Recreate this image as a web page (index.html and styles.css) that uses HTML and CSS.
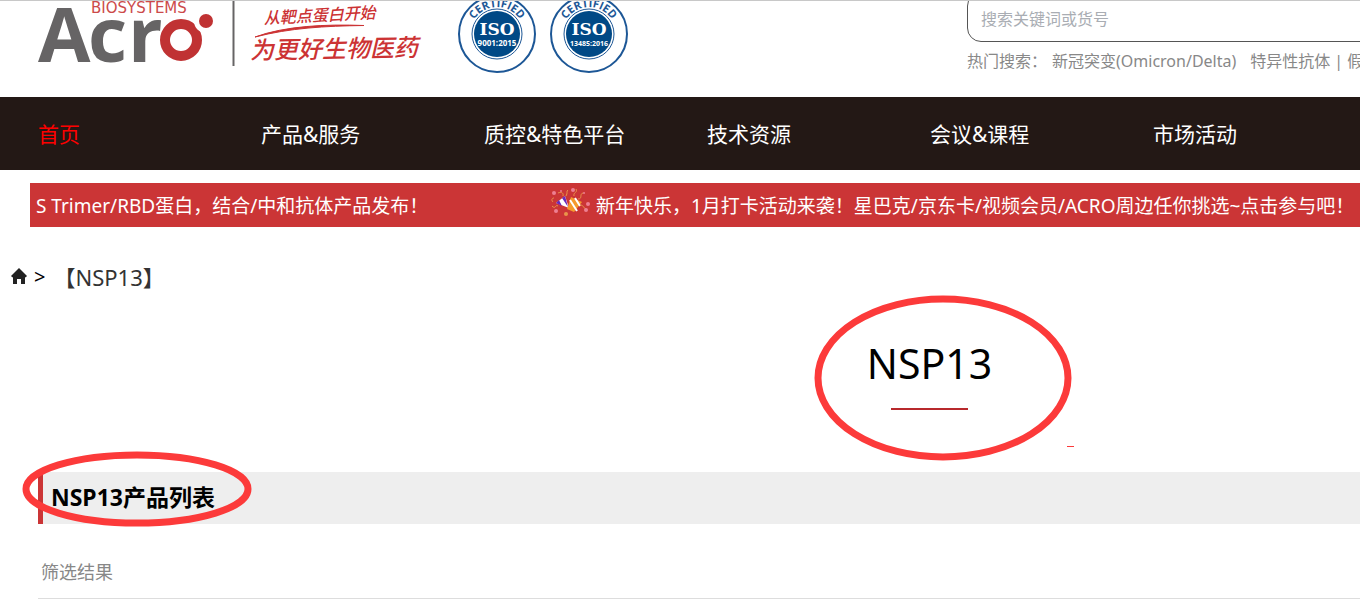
FILE: index.html
```html
<!DOCTYPE html>
<html lang="zh-CN">
<head>
<meta charset="utf-8">
<title>NSP13</title>
<link rel="stylesheet" href="styles.css">
</head>
<body>
<div class="page">
  <header class="header">
    <div class="brand">
      <svg class="logo" width="400" height="80" viewBox="30 0 400 80" role="img" aria-label="Acro Biosystems">
        <text class="logo-sub" x="91" y="13">BIOSYSTEMS</text>
        <text class="logo-word" x="38 88 128" y="62">Acr</text>
        <circle cx="181" cy="40" r="16" fill="none" stroke="#c03233" stroke-width="10"/>
        <circle cx="206" cy="21" r="12" fill="#fff"/>
        <circle cx="206" cy="21" r="7" fill="#c03233"/>
        <path d="M233.500 0V66" stroke="#666465" stroke-width="2"/>
        <g class="slogan">
          <text class="slogan-small" x="264" y="24" transform="rotate(-3 264 24)">从靶点蛋白开始</text>
          <path d="M255 37C285 26 325 24 364 25.500C325 26 290 28 255 37Z" stroke="#cc3334" stroke-width="1"/>
          <text class="slogan-large" x="250" y="59" transform="rotate(-1 250 59)">为更好生物医药</text>
        </g>
      </svg>
      <svg class="badge" width="80" height="80" viewBox="0 0 80 80" role="img" aria-label="ISO 9001:2015">
        <path id="arc1" d="M13 34A27 27 0 0 1 67 34" fill="none"/>
        <circle cx="40" cy="34" r="38" fill="#fff" stroke="#1d5796" stroke-width="2"/>
        <circle cx="40" cy="34" r="25" fill="#fff" stroke="#1d5796" stroke-width="1"/>
        <circle cx="40" cy="34" r="23" fill="#004986"/>
        <text class="badge-arc"><textPath href="#arc1" startOffset="50%">CERTIFIED</textPath></text>
        <text class="badge-iso" x="40" y="35">ISO</text>
        <text class="badge-num" x="40" y="46">9001:2015</text>
      </svg>
      <svg class="badge" width="80" height="80" viewBox="0 0 80 80" role="img" aria-label="ISO 13485:2016">
        <path id="arc2" d="M13 34A27 27 0 0 1 67 34" fill="none"/>
        <circle cx="40" cy="34" r="38" fill="#fff" stroke="#1d5796" stroke-width="2"/>
        <circle cx="40" cy="34" r="25" fill="#fff" stroke="#1d5796" stroke-width="1"/>
        <circle cx="40" cy="34" r="23" fill="#004986"/>
        <text class="badge-arc"><textPath href="#arc2" startOffset="50%">CERTIFIED</textPath></text>
        <text class="badge-iso" x="40" y="35">ISO</text>
        <text class="badge-num badge-num-long" x="40" y="46">13485:2016</text>
      </svg>
    </div>
    <div class="search">
      <input class="search-box" type="text" aria-label="搜索" placeholder="搜索关键词或货号">
      <div class="hot">
        <span>热门搜索：</span>
        <a class="hot-first" href="#">新冠突变(Omicron/Delta)</a>
        <a href="#">特异性抗体</a><span class="bar">|</span><a href="#">假病毒</a>
      </div>
    </div>
  </header>

  <nav class="nav">
    <a class="active" href="#">首页</a>
    <a href="#">产品&amp;服务</a>
    <a href="#">质控&amp;特色平台</a>
    <a href="#">技术资源</a>
    <a href="#">会议&amp;课程</a>
    <a href="#">市场活动</a>
  </nav>

  <div class="notice">
    <a class="notice-first" href="#">S Trimer/RBD蛋白，结合/中和抗体产品发布！</a>
    <a class="notice-second" href="#">
      <svg width="40" height="30" viewBox="0 0 40 30" aria-hidden="true">
        <path d="M6 16L15 9L19 21Z" fill="#fff"/>
        <path d="M6 16L9 13L12 19ZM12 11L15 9L18 20Z" fill="#6a2bb8"/>
        <path d="M21 10L32 15L24 25L17 22Z" fill="#f59a2d"/>
        <path d="M20 13L27 24M25 11L30 19" stroke="#fff" stroke-width="2"/>
        <path d="M13 9C14 5 10 5 8 6M16 9C18 6 16 4 18 3M24 9C23 5 28 6 26 2M28 12C33 12 29 7 33 6M3 15C1 13 2 11 4 11M8 19C5 17 6 23 2 19M30 18C34 18 33 21 36 22" fill="none" stroke="#e9954a" stroke-width="1"/>
        <g fill="#ee7f92"><circle cx="4" cy="6" r="2"/><circle cx="23" cy="3" r="2"/><circle cx="34" cy="6" r="1"/><circle cx="38" cy="17" r="2"/><circle cx="6" cy="24" r="2"/><circle cx="36" cy="23" r="2"/><circle cx="11" cy="4" r="1"/></g>
        <circle cx="16" cy="27" r="2" fill="#e9954a"/>
      </svg>
      新年快乐，1月打卡活动来袭！星巴克/京东卡/视频会员/ACRO周边任你挑选~点击参与吧！
    </a>
  </div>

  <div class="crumbs">
    <a class="home" href="#" aria-label="首页">
      <svg width="18" height="18" viewBox="0 0 18 18"><path d="M9 1L17 9L15.500 10.500L15 10V17H11V12H7V17H3V10L2.500 10.500L1 9Z" fill="#222"/></svg>
    </a>
    <span class="arrow">&gt;</span>
    <span>【NSP13】</span>
  </div>

  <main>
    <div class="title">
      <h1>NSP13</h1>
      <svg class="mark mark-title" width="258" height="166" viewBox="0 0 258 166" aria-hidden="true"><ellipse cx="129" cy="83" rx="125" ry="79"/></svg>
      <span class="dash"></span>
    </div>
    <div class="list-head">
      <h2>NSP13产品列表</h2>
      <svg class="mark mark-list" width="230" height="76" viewBox="0 0 230 76" aria-hidden="true"><ellipse cx="115" cy="38" rx="111" ry="34"/></svg>
    </div>
    <div class="filter">筛选结果</div>
  </main>
</div>
</body>
</html>
```
FILE: styles.css
```css
* { box-sizing: border-box; }
body {
  margin: 0;
  overflow: hidden;
  background: #fff;
  color: #000;
  font-family: "Noto Sans", "Noto Sans CJK SC", sans-serif;
  border-top: 1px solid #c8c8c8;
}
a { color: inherit; text-decoration: none; white-space: nowrap; }
.page { overflow: hidden; }

.header {
  display: flex;
  justify-content: space-between;
  height: 96px;
  overflow: hidden;
}
.brand { display: flex; padding-left: 30px; }
.brand svg { flex: none; margin-top: -1px; }
.badge { margin-left: 12px; }
.logo + .badge { margin-left: 27px; }
.logo-sub { font: 15px "DejaVu Sans", sans-serif; fill: #cc4a4a; }
.logo-word { font: bold 76px "Open Sans", sans-serif; fill: #666465; }
.slogan { fill: #cc3334; font-family: "Noto Sans CJK SC", sans-serif; font-style: italic; font-weight: 500; }
.slogan-small { font-size: 16px; }
.slogan-large { font-size: 24px; }
.badge text { text-anchor: middle; }
.badge-arc { font: bold 11px "Open Sans", sans-serif; fill: #1d5796; }
.badge-iso { font: bold 17px "DejaVu Serif", serif; fill: #fff; }
.badge-num { font: bold 8px "Open Sans", sans-serif; fill: #fff; }
.badge-num-long { font-size: 7px; }

.search { width: 393px; flex: none; }
.search-box {
  display: block;
  width: 110%;
  height: 50px;
  margin-top: -9px;
  padding: 4px 13px 0;
  border: 1px solid #555;
  border-radius: 14px;
  background: #fff;
  font: 16px "Noto Sans", "Noto Sans CJK SC", sans-serif;
}
.search-box::placeholder { color: #a9adb3; opacity: 1; }
.hot {
  display: flex;
  padding-top: 7px;
  font-size: 16px;
  line-height: 24px;
  color: #888;
  white-space: nowrap;
}
.hot-first { margin: 0 14px 0 5px; }
.bar { margin: 0 4px; }

.nav {
  display: flex;
  height: 73px;
  padding-left: 38px;
  align-items: center;
  background: #231815;
  color: #fff;
  font-size: 21px;
}
.nav a { flex: 0 0 223px; padding-bottom: 1px; }
.nav .active { color: #f00; }

.notice {
  display: flex;
  align-items: center;
  height: 44px;
  margin: 13px 0 0 30px;
  padding-left: 6px;
  background: #cb3536;
  color: #fff;
  font-size: 19px;
}
.notice-first { flex: 0 0 514px; }
.notice-second { display: flex; align-items: center; gap: 6px; }
.notice-second svg { flex: none; margin-bottom: 6px; }

.crumbs {
  display: flex;
  align-items: center;
  height: 100px;
  padding: 0 0 2px 10px;
  color: #333;
  font-size: 22px;
}
.home { display: flex; }
.arrow { margin: 0 8px 0 6px; color: #000; font-size: 20px; }

.title {
  position: relative;
  width: 136.7%;
  height: 145px;
  text-align: center;
}
.title h1 {
  margin: 0;
  font-size: 41px;
  font-weight: 400;
  line-height: 72px;
}
.title h1::after {
  content: "";
  display: block;
  width: 77px;
  height: 2px;
  margin: 9px auto 0;
  background: #b8292c;
}
.mark { position: absolute; fill: none; stroke: #fc3a3a; stroke-width: 7px; }
.mark-title { top: -32px; left: 814px; }
.dash {
  position: absolute;
  top: 119px;
  left: 1067px;
  width: 7px;
  height: 1px;
  background: #fc3a3a;
}
.list-head {
  position: relative;
  height: 52px;
  margin-left: 38px;
  padding-left: 8px;
  border-left: 5px solid #cb3536;
  background: #eee;
}
.list-head h2 { margin: 0; font-size: 23px; line-height: 50px; }
.mark-list { top: -21px; left: -21px; }
.filter {
  height: 75px;
  margin-left: 38px;
  padding: 35px 3px 0;
  border-bottom: 1px solid #ddd;
  color: #888;
  font-size: 18px;
  line-height: 26px;
}
```
